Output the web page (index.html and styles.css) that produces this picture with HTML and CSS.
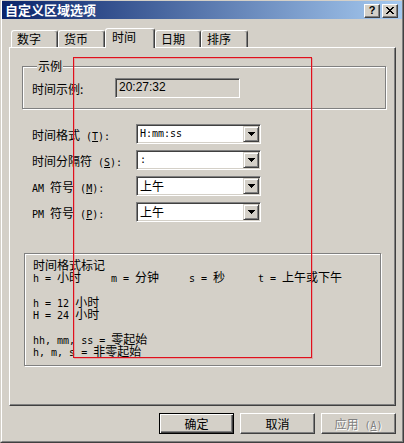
FILE: index.html
```html
<!DOCTYPE html>
<html lang="zh-CN">
<head>
    <meta charset="UTF-8">
    <title>自定义区域选项</title>
    <link rel="stylesheet" href="styles.css">
</head>
<body>

<div class="window">
    <div class="frame">
        <div class="titlebar">
            <div class="title">自定义区域选项</div>
            <div class="caption-btns">
                <div class="cap-btn"><span class="help">?</span></div>
                <div class="cap-btn">
                    <svg width="8" height="7" viewBox="0 0 8 7" shape-rendering="crispEdges">
                        <path d="M0 0h2v1h-2z M6 0h2v1h-2z M1 1h2v1h-2z M5 1h2v1h-2z M2 2h4v1h-4z M3 3h2v1h-2z M2 4h4v1h-4z M1 5h2v1h-2z M5 5h2v1h-2z M0 6h2v1h-2z M6 6h2v1h-2z" fill="#000"/>
                    </svg>
                </div>
            </div>
        </div>

        <div class="tabs">
            <div class="tab">数字</div>
            <div class="tab">货币</div>
            <div class="tab active">时间</div>
            <div class="tab narrow">日期</div>
            <div class="tab">排序</div>
        </div>

        <div class="panel">
            <div class="group example">
                <div class="legend">示例</div>
                <div class="sample-row">
                    <span class="sample-label">时间示例:</span>
                    <div class="sample-box">20:27:32</div>
                </div>
            </div>

            <div class="fields">
                <div class="field">
                    <label class="field-label">时间格式<span class="en"> (<u>T</u>):</span></label>
                    <div class="combo">
                        <div class="combo-text en">H:mm:ss</div>
                        <div class="combo-btn"><svg width="7" height="4" viewBox="0 0 7 4" shape-rendering="crispEdges"><path d="M0 0h7v1h-1v1h-1v1h-1v1h-1v-1h-1v-1h-1v-1h-1z" fill="#000"/></svg></div>
                    </div>
                </div>
                <div class="field">
                    <label class="field-label">时间分隔符<span class="en"> (<u>S</u>):</span></label>
                    <div class="combo">
                        <div class="combo-text en">:</div>
                        <div class="combo-btn"><svg width="7" height="4" viewBox="0 0 7 4" shape-rendering="crispEdges"><path d="M0 0h7v1h-1v1h-1v1h-1v1h-1v-1h-1v-1h-1v-1h-1z" fill="#000"/></svg></div>
                    </div>
                </div>
                <div class="field">
                    <label class="field-label"><span class="en">AM </span>符号<span class="en"> (<u>M</u>):</span></label>
                    <div class="combo">
                        <div class="combo-text">上午</div>
                        <div class="combo-btn"><svg width="7" height="4" viewBox="0 0 7 4" shape-rendering="crispEdges"><path d="M0 0h7v1h-1v1h-1v1h-1v1h-1v-1h-1v-1h-1v-1h-1z" fill="#000"/></svg></div>
                    </div>
                </div>
                <div class="field">
                    <label class="field-label"><span class="en">PM </span>符号<span class="en"> (<u>P</u>):</span></label>
                    <div class="combo">
                        <div class="combo-text">上午</div>
                        <div class="combo-btn"><svg width="7" height="4" viewBox="0 0 7 4" shape-rendering="crispEdges"><path d="M0 0h7v1h-1v1h-1v1h-1v1h-1v-1h-1v-1h-1v-1h-1z" fill="#000"/></svg></div>
                    </div>
                </div>
            </div>

            <div class="group notes">
                <div class="line">时间格式标记</div>
                <div class="line">
                    <span class="col"><span class="en">h = </span>小时</span><span class="col"><span class="en">m = </span>分钟</span><span class="col last"><span class="en">s = </span>秒</span><span><span class="en">t = </span>上午或下午</span>
                </div>
                <div class="line"></div>
                <div class="line"><span class="en">h = 12 </span>小时</div>
                <div class="line"><span class="en">H = 24 </span>小时</div>
                <div class="line"></div>
                <div class="line"><span class="en">hh, mm, ss = </span>零起始</div>
                <div class="line"><span class="en">h, m, s = </span>非零起始</div>
            </div>
        </div>

        <div class="buttons">
            <button class="btn default">确定</button>
            <button class="btn">取消</button>
            <button class="btn disabled">应用<span class="en"> (<u>A</u>)</span></button>
        </div>
    </div>
</div>

<div class="mark"></div>

</body>
</html>
```

FILE: styles.css
```css
body {
    margin: 0;
    position: relative;
    background-color: #d4d0c8;
    font-family: "Noto Sans CJK SC", sans-serif;
    font-size: 12px;
    color: #000;
}

.en {
    font-family: "DejaVu Sans Mono", monospace;
    font-size: 10px;
    white-space: pre;
}

/* window frame */

.window {
    width: 404px;
    height: 443px;
    box-sizing: border-box;
    border-left: 1px solid #d4d0c8;
    border-right: 1px solid #404040;
    border-bottom: 1px solid #404040;
}

.frame {
    height: 100%;
    box-sizing: border-box;
    border-left: 1px solid #fff;
    border-right: 1px solid #808080;
    border-bottom: 1px solid #808080;
    padding-top: 1px;
}

.titlebar {
    height: 18px;
    display: flex;
    align-items: center;
    padding: 0 4px 0 3px;
    background: linear-gradient(to right, #0a246a, #a6caf0);
}

.title {
    flex: 1;
    color: #fff;
    font-weight: bold;
    font-size: 13px;
    line-height: 18px;
}

.caption-btns {
    display: flex;
    gap: 2px;
    margin-top: 1px;
}

.cap-btn {
    width: 16px;
    height: 14px;
    box-sizing: border-box;
    display: flex;
    align-items: center;
    justify-content: center;
    background-color: #d4d0c8;
    border: 1px solid;
    border-color: #fff #404040 #404040 #fff;
    box-shadow: inset -1px -1px #808080;
}

.help {
    font-family: "Liberation Sans", sans-serif;
    font-weight: bold;
    font-size: 11px;
    line-height: 11px;
}

/* tabs */

.tabs {
    display: flex;
    align-items: flex-end;
    height: 19px;
    margin: 9px 0 0 9px;
}

.tab {
    width: 47px;
    height: 17px;
    box-sizing: border-box;
    padding: 2px 0 0 5px;
    line-height: 12px;
    border: 1px solid;
    border-bottom: none;
    border-color: #fff #404040 transparent #fff;
    border-radius: 3px 3px 0 0;
    box-shadow: inset -1px 0 #808080;
}

.tab.narrow {
    width: 46px;
}

.tab.active {
    width: 50px;
    height: 20px;
    margin-bottom: -1px;
    padding: 2px 0 0 6px;
    position: relative;
    z-index: 1;
    background-color: #d4d0c8;
}

.panel {
    height: 359px;
    box-sizing: border-box;
    margin: 0 6px 0 7px;
    border: 1px solid;
    border-color: #fff #404040 #404040 #fff;
    box-shadow: inset -1px -1px #808080;
}

/* group boxes */

.group {
    box-sizing: border-box;
    border: 1px solid #808080;
    box-shadow: inset 1px 1px #fff, 1px 1px #fff;
}

.legend {
    display: table;
    margin: -7px 0 0 5px;
    padding: 0 1px;
    line-height: 12px;
    background-color: #d4d0c8;
}

.example {
    width: 364px;
    margin: 18px 0 0 12px;
    padding: 0 0 10px 9px;
}

.sample-row {
    display: flex;
    align-items: center;
    margin-top: 6px;
}

.sample-label {
    width: 83px;
}

.sample-box {
    width: 125px;
    height: 20px;
    box-sizing: border-box;
    padding-left: 3px;
    line-height: 16px;
    font-family: "Liberation Sans", sans-serif;
    font-size: 12px;
    border: 1px solid;
    border-color: #808080 #fff #fff #808080;
    box-shadow: inset 1px 1px #404040, inset -1px -1px #d4d0c8;
}

/* combo rows */

.fields {
    display: flex;
    flex-direction: column;
    gap: 6px;
    margin: 15px 0 0 22px;
}

.field {
    display: flex;
    align-items: center;
    height: 20px;
}

.field-label {
    width: 104px;
}

.combo {
    width: 125px;
    height: 20px;
    box-sizing: border-box;
    display: flex;
    background-color: #fff;
    border: 1px solid;
    border-color: #808080 #fff #fff #808080;
    box-shadow: inset 1px 1px #404040, inset -1px -1px #d4d0c8;
    padding: 1px;
}

.combo-text {
    flex: 1;
    padding-left: 2px;
    line-height: 16px;
}

.combo-btn {
    width: 16px;
    height: 16px;
    box-sizing: border-box;
    display: flex;
    align-items: center;
    justify-content: center;
    background-color: #d4d0c8;
    border: 1px solid;
    border-color: #d4d0c8 #404040 #404040 #d4d0c8;
    box-shadow: inset 1px 1px #fff, inset -1px -1px #808080;
}

/* notation box */

.notes {
    width: 357px;
    margin: 31px 0 0 14px;
    padding: 5px 0 8px 8px;
}

.line {
    height: 12.3px;
    line-height: 12.3px;
    white-space: nowrap;
}

.col {
    display: inline-block;
    width: 78px;
}

.col.last {
    width: 69px;
}

/* dialog buttons */

.buttons {
    display: flex;
    justify-content: flex-end;
    gap: 6px;
    margin: 7px 6px 0 0;
}

.btn {
    width: 75px;
    height: 21px;
    padding: 0;
    font-family: "Noto Sans CJK SC", sans-serif;
    font-size: 12px;
    color: #000;
    background-color: #d4d0c8;
    border: 1px solid;
    border-color: #fff #404040 #404040 #fff;
    box-shadow: inset -1px -1px #808080;
}

.btn.default {
    border-color: #000;
    box-shadow: inset 1px 1px #fff, inset -1px -1px #404040, inset -2px -2px #808080;
}

.btn.disabled {
    color: #808080;
    text-shadow: 1px 1px #fff;
}

/* red annotation frame drawn over the dialog */

.mark {
    position: absolute;
    left: 73px;
    top: 57px;
    width: 239px;
    height: 301px;
    box-sizing: border-box;
    border: 1px solid #e0101c;
    box-shadow: 1px 1px 0 rgba(230, 90, 100, 0.35), inset 1px 1px 0 rgba(230, 90, 100, 0.35);
    pointer-events: none;
}
```
